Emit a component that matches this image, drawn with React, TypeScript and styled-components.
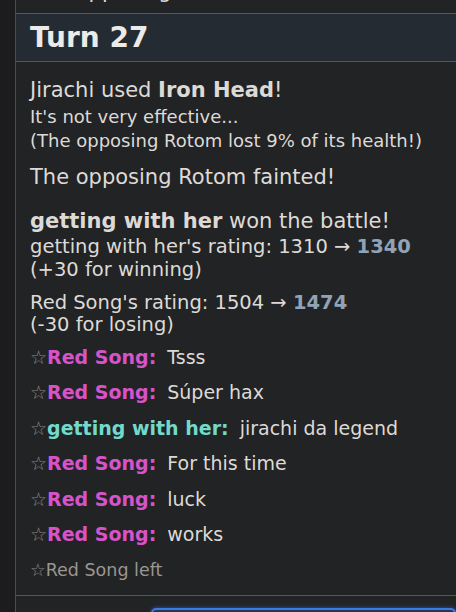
import React from 'react';
import styled, { createGlobalStyle } from 'styled-components';

const GlobalStyle = createGlobalStyle`
  html, body {
    margin: 0;
    padding: 0;
    background: #1c1c1e;
  }
  #root {
    height: 612px;
    overflow: hidden;
  }
`;

const Page = styled.div`
  display: flex;
  height: 612px;
  font-family: 'DejaVu Sans', Verdana, sans-serif;
  color: #dddad6;
`;

const Gutter = styled.div`
  width: 15px;
  flex: none;
  background: #1c1c1e;
`;

const Log = styled.div`
  flex: 1;
  display: flex;
  flex-direction: column;
  background: #222325;
  border-left: 1px solid #4c4c4e;
  overflow: hidden;

  & > * {
    flex-shrink: 0;
  }
`;

const CutOff = styled.div`
  height: 13px;
  overflow: hidden;
  padding-left: 14px;
  font-size: 21px;
  white-space: nowrap;
`;

const CutLine = styled.div`
  line-height: 24px;
  margin-top: -21px;
`;

const TurnHeader = styled.h2`
  margin: 0;
  height: 47px;
  display: flex;
  align-items: center;
  padding: 0 14px;
  background: #252b32;
  border-top: 1px solid #555759;
  border-bottom: 1px solid #555759;
  font-size: 28px;
  font-weight: bold;
  color: #ecebe8;
`;

const Body = styled.div`
  padding: 0 14px;
`;

const Line = styled.div<{ $size: number; $height: number; $gap?: number }>`
  font-size: ${p => p.$size}px;
  line-height: ${p => p.$height}px;
  margin-top: ${p => p.$gap ?? 0}px;
  white-space: nowrap;
`;

const Rating = styled.strong`
  color: #91a3b6;
`;

const ChatRow = styled.div<{ $gap?: number }>`
  padding: 5px 0;
  margin-top: ${p => p.$gap ?? 0}px;
  font-size: 19px;
  line-height: 25.4px;
  white-space: nowrap;
`;

const Star = styled.span`
  color: #8e8a84;
`;

const Name = styled.strong<{ $color: string }>`
  color: ${p => p.$color};
  margin-right: 11px;
`;

const Notice = styled.div`
  margin-top: 1px;
  padding: 5px 0;
  font-size: 17.5px;
  line-height: 25px;
  color: #9a9690;
`;

const Spacer = styled.div`
  flex: 1;
`;

const Footer = styled.div`
  height: 4px;
  border-top: 1px solid #555759;
  padding: 12px 0 0 135px;
`;

const InputBox = styled.div`
  height: 4px;
  border: 2px solid #3b7be8;
  border-bottom: none;
  border-radius: 5px 5px 0 0;
  background: linear-gradient(#2b3a52, #262d38);
  box-shadow: 0 0 4px rgba(59, 123, 232, 0.6);
`;

const RED = '#d653c9';
const TEAL = '#72d9cb';

const chats: { name: string; color: string; text: string }[] = [
  { name: 'Red Song', color: RED, text: 'Tsss' },
  { name: 'Red Song', color: RED, text: 'Súper hax' },
  { name: 'getting with her', color: TEAL, text: 'jirachi da legend' },
  { name: 'Red Song', color: RED, text: 'For this time' },
  { name: 'Red Song', color: RED, text: 'luck' },
  { name: 'Red Song', color: RED, text: 'works' },
];

export default function App() {
  return (
    <>
      <GlobalStyle />
      <Page>
        <Gutter />
        <Log>
          <CutOff>
            <CutLine>The opposing Rotom used Trick!</CutLine>
          </CutOff>
          <TurnHeader>Turn 27</TurnHeader>
          <Body>
            <Line $size={21} $height={29} $gap={14}>
              Jirachi used <strong>Iron Head</strong>!
            </Line>
            <Line $size={18} $height={24}>It's not very effective...</Line>
            <Line $size={18} $height={24}>(The opposing Rotom lost 9% of its health!)</Line>
            <Line $size={21} $height={28} $gap={10}>The opposing Rotom fainted!</Line>
            <Line $size={21} $height={28} $gap={16}>
              <strong>getting with her</strong> won the battle!
            </Line>
            <Line $size={19.5} $height={23}>
              getting with her's rating: 1310 → <Rating>1340</Rating>
            </Line>
            <Line $size={19.5} $height={23}>(+30 for winning)</Line>
            <Line $size={19.5} $height={23} $gap={10}>
              Red Song's rating: 1504 → <Rating>1474</Rating>
            </Line>
            <Line $size={19.5} $height={22}>(-30 for losing)</Line>
            {chats.map((c, i) => (
              <ChatRow key={i} $gap={i === 0 ? 4 : 0}>
                <Star>☆</Star>
                <Name $color={c.color}>{c.name}:</Name>
                {c.text}
              </ChatRow>
            ))}
            <Notice>
              <Star>☆</Star>Red Song left
            </Notice>
          </Body>
          <Spacer />
          <Footer>
            <InputBox />
          </Footer>
        </Log>
      </Page>
    </>
  );
}
